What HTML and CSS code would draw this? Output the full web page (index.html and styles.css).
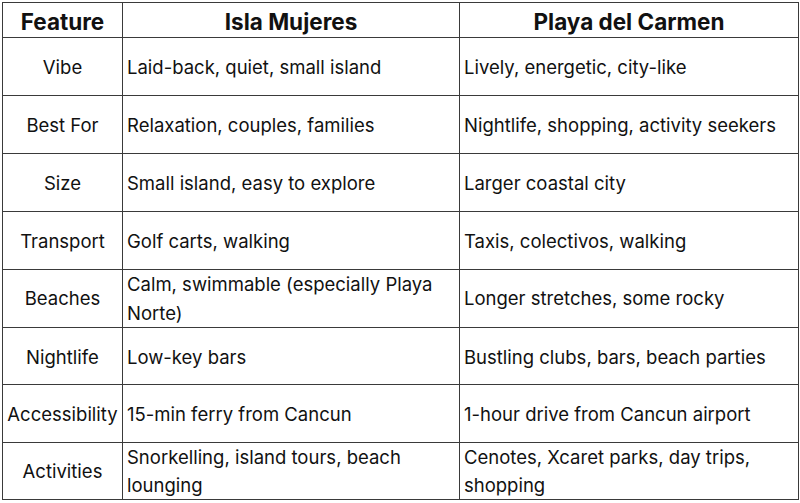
FILE: index.html
```html
<!DOCTYPE html>
<html lang="en">
<head>
<meta charset="utf-8">
<title>Isla Mujeres vs Playa del Carmen</title>
<link rel="stylesheet" href="styles.css">
</head>
<body>
<table class="compare">
  <colgroup>
    <col class="c-feature">
    <col class="c-isla">
    <col class="c-playa">
  </colgroup>
  <thead>
    <tr>
      <th>Feature</th>
      <th>Isla Mujeres</th>
      <th>Playa del Carmen</th>
    </tr>
  </thead>
  <tbody>
    <tr><td class="feat">Vibe</td><td>Laid-back, quiet, small island</td><td>Lively, energetic, city-like</td></tr>
    <tr><td class="feat">Best For</td><td>Relaxation, couples, families</td><td>Nightlife, shopping, activity seekers</td></tr>
    <tr><td class="feat">Size</td><td>Small island, easy to explore</td><td>Larger coastal city</td></tr>
    <tr><td class="feat">Transport</td><td>Golf carts, walking</td><td>Taxis, colectivos, walking</td></tr>
    <tr class="wrap"><td class="feat">Beaches</td><td>Calm, swimmable (especially Playa Norte)</td><td>Longer stretches, some rocky</td></tr>
    <tr class="short"><td class="feat">Nightlife</td><td>Low-key bars</td><td>Bustling clubs, bars, beach parties</td></tr>
    <tr><td class="feat">Accessibility</td><td>15-min ferry from Cancun</td><td>1-hour drive from Cancun airport</td></tr>
    <tr class="wrap last"><td class="feat">Activities</td><td>Snorkelling, island tours, beach lounging</td><td>Cenotes, Xcaret parks, day trips, shopping</td></tr>
  </tbody>
</table>
</body>
</html>
```
FILE: styles.css
```css
html, body {
  margin: 0;
  background: #ffffff;
}
body {
  padding: 2px 0 0 2px;
  font-family: Inter, "Open Sans", sans-serif;
  color: #111111;
}
.compare {
  border-collapse: collapse;
  table-layout: fixed;
  width: 796px;
  font-size: 18.5px;
}
.c-feature { width: 120px; }
.c-isla { width: 337px; }
.c-playa { width: 339px; }
.compare th,
.compare td {
  border: 1px solid #3a3a3a;
  padding: 2px 4px 0;
  line-height: 29px;
  vertical-align: middle;
  text-align: left;
}
.compare th {
  height: 31px;
  padding-top: 3px;
  font-weight: 700;
  font-size: 22.5px;
  text-align: center;
}
.compare td {
  height: 55px;
}
.compare tr.short td {
  height: 54px;
}
.compare tr.wrap td {
  height: 57px;
  padding-top: 0;
  line-height: 28.5px;
}
.compare tr.wrap.last td {
  height: 56px;
  line-height: 28px;
}
.compare td.feat {
  text-align: center;
  padding-left: 2px;
  padding-right: 2px;
}
```
